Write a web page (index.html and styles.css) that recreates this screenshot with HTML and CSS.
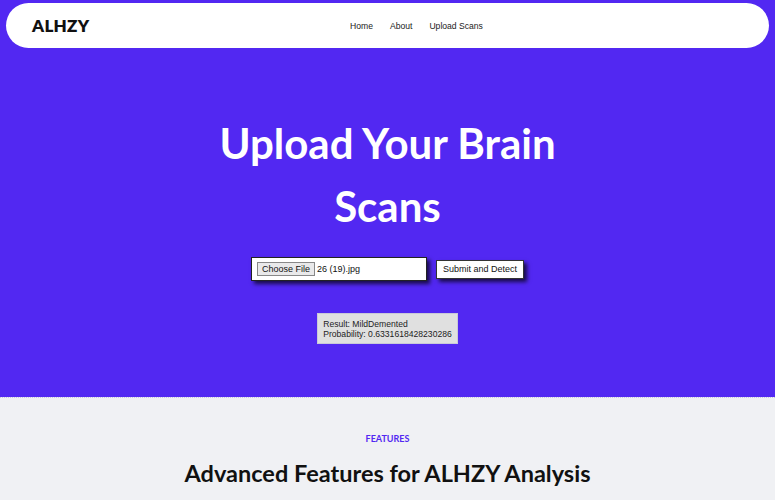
FILE: index.html
```html
<!DOCTYPE html>
<html>
<head>
<meta charset="utf-8">
<link rel="stylesheet" href="styles.css">
</head>
<body>
<section class="hero">
  <nav class="nav">
    <div class="logo">ALHZY</div>
    <ul class="links">
      <li>Home</li>
      <li>About</li>
      <li>Upload Scans</li>
    </ul>
    <div class="spacer"></div>
  </nav>
  <h1 class="title">Upload Your Brain<br>Scans</h1>
  <form class="upload">
    <div class="file"><span class="choose">Choose File</span><span class="fname">26 (19).jpg</span></div>
    <button type="button" class="submit">Submit and Detect</button>
  </form>
  <div class="result">
    <div>Result: MildDemented</div>
    <div>Probability: 0.6331618428230286</div>
  </div>
</section>
<section class="features">
  <div class="eyebrow">FEATURES</div>
  <h2 class="ftitle">Advanced Features for ALHZY Analysis</h2>
</section>
</body>
</html>
```
FILE: styles.css
```css
* { box-sizing: border-box; }
html, body { margin: 0; padding: 0; }
body { font-family: "Liberation Sans", Arial, sans-serif; background: #f0f1f4; }
.hero {
  background: #5228f2;
  height: 397px;
  padding: 3px 6px 0;
  display: flex;
  flex-direction: column;
  align-items: center;
}
.nav {
  width: 100%;
  height: 45px;
  background: #fff;
  border-radius: 23px;
  display: flex;
  align-items: center;
  padding: 0 26px;
}
.logo {
  font-family: "Lato", "Liberation Sans", sans-serif;
  font-weight: 800;
  font-size: 17px;
  color: #111;
  width: 318px;
  letter-spacing: 0.3px;
}
.links {
  list-style: none;
  margin: 0;
  padding: 0;
  display: flex;
  gap: 17px;
  font-size: 8.6px;
  color: #222;
}
.spacer { flex: 1; }
.title {
  margin: 64px 0 0;
  font-family: "Lato", sans-serif;
  font-weight: 700;
  font-size: 42px;
  line-height: 63px;
  color: #fff;
  text-align: center;
}
.upload {
  margin: 19px 0 0 0;
  display: flex;
  align-items: center;
  gap: 9px;
}
.file {
  width: 176px;
  height: 24px;
  background: #fff;
  border: 1px solid #222;
  box-shadow: 3px 3px 4px rgba(0,0,0,0.7);
  display: flex;
  align-items: center;
  padding-left: 5px;
  font-size: 9px;
  color: #111;
}
.choose {
  background: #e9e9ea;
  border: 1px solid #888;
  padding: 1px 4px;
  margin-right: 2px;
}
.submit {
  height: 19px;
  width: 88px;
  padding: 0;
  background: #fff;
  border: 1px solid #333;
  box-shadow: 3px 3px 4px rgba(0,0,0,0.7);
  font-family: "Liberation Sans", Arial, sans-serif;
  font-size: 9px;
  color: #111;
}
.result {
  margin: 32px 0 0 0;
  background: #e0e0e0;
  border: 1px solid #c9c9d8;
  padding: 5px 5px 4px;
  font-size: 8.6px;
  line-height: 10px;
  color: #222;
}
.features {
  border-top: 1px dotted #c8c8e0;
  text-align: center;
  padding-top: 35px;
}
.eyebrow {
  font-family: "Lato", sans-serif;
  font-weight: 700;
  font-size: 9px;
  color: #5228f2;
}
.ftitle {
  margin: 15px 0 0;
  font-family: "Lato", sans-serif;
  font-weight: 700;
  font-size: 23.5px;
  color: #111;
}
```
